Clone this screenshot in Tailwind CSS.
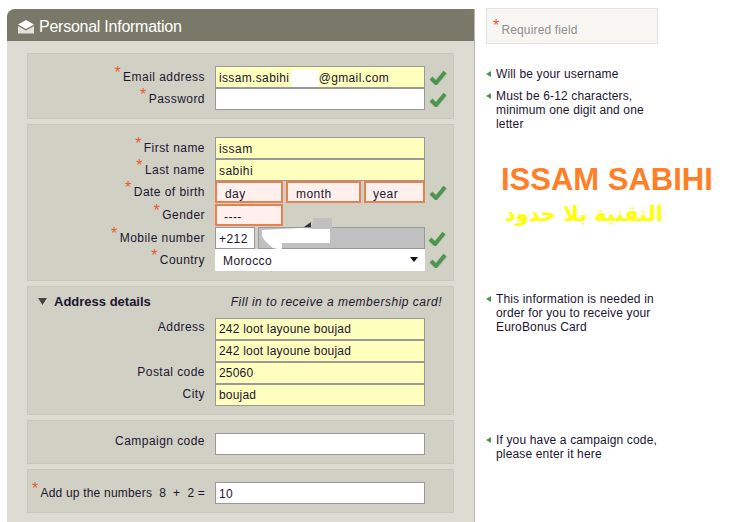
<!DOCTYPE html>
<html lang="en">
<head>
<meta charset="utf-8">
<script src="https://cdn.jsdelivr.net/npm/@tailwindcss/browser@4"></script>
<title>Personal Information</title>
</head>
<body class="bg-white font-['Liberation_Sans',Arial,sans-serif] text-[12px] text-[#1c1530] tracking-[0.45px] overflow-hidden">
<div class="flex h-[522px] w-[732px] overflow-hidden">
  <main class="ml-[7px] mt-[9px] w-[468px] h-[513px] shrink-0 bg-[#dddcd3] border-r border-[#b9b8ae] rounded-tl-[8px]">
    <header class="h-[32px] bg-[#7a7868] rounded-tl-[8px] flex items-center pl-[11px] pt-[3px] text-white text-[16px] tracking-[-0.25px]">
      <svg width="16" height="15" viewBox="0 0 16 15" class="mr-[5px]"><path d="M0 5.500 8 1l8 4.500-8 4.500z" fill="#fff"/><path d="M0 7l8 4.500L16 7v7.500H0z" fill="#e3e2da"/></svg>
      Personal Information
    </header>
    <div class="pt-[12px] pl-[20px] flex flex-col gap-[5px] w-[447px]">

      <section class="h-[66px] bg-[#d1d0c4] border border-[#c8c7ba] pt-[12px] relative">
        <div class="flex h-[22px]"><label class="w-[177px] text-right -mt-[1px]"><span class="text-[#ee5a2a] text-[16px] leading-none align-[3px] mr-[2px]">*</span>Email address</label><input class="ml-[10px] w-[210px] h-[22px] bg-[#ffffbd] border border-[#999] px-[3px] pt-[1px] tracking-[0.35px]" value="issam.sabihi        @gmail.com"><svg class="ml-[4px] mt-[3px]" width="18" height="16" viewBox="0 0 18 16"><path d="M2 10l5 5L17 4" fill="none" stroke="#c2c1b5" stroke-width="4"/><path d="M2 9l5 5L16 3" fill="none" stroke="#4c9650" stroke-width="4"/></svg></div>
        <div class="flex h-[22px]"><label class="w-[177px] text-right -mt-[1px]"><span class="text-[#ee5a2a] text-[16px] leading-none align-[3px] mr-[2px]">*</span>Password</label><input class="ml-[10px] w-[210px] h-[22px] bg-white border border-[#999] px-[3px]"><svg class="ml-[4px] mt-[3px]" width="18" height="16" viewBox="0 0 18 16"><path d="M2 10l5 5L17 4" fill="none" stroke="#c2c1b5" stroke-width="4"/><path d="M2 9l5 5L16 3" fill="none" stroke="#4c9650" stroke-width="4"/></svg></div>
        <div class="absolute left-[263px] top-[16px] w-[28px] h-[17px] bg-white rounded-[4px]"></div>
      </section>

      <section class="h-[157px] bg-[#d1d0c4] border border-[#c8c7ba] pt-[12px] relative">
        <div class="flex h-[22px]"><label class="w-[177px] text-right -mt-[1px]"><span class="text-[#ee5a2a] text-[16px] leading-none align-[3px] mr-[2px]">*</span>First name</label><input class="ml-[10px] w-[210px] h-[22px] bg-[#ffffbd] border border-[#999] px-[3px] pt-[1px]" value="issam"></div>
        <div class="flex h-[22px]"><label class="w-[177px] text-right -mt-[1px]"><span class="text-[#ee5a2a] text-[16px] leading-none align-[3px] mr-[2px]">*</span>Last name</label><input class="ml-[10px] w-[210px] h-[22px] bg-[#ffffbd] border border-[#999] px-[3px] pt-[1px]" value="sabihi"></div>
        <div class="flex h-[23px]"><label class="w-[177px] text-right -mt-[1px]"><span class="text-[#ee5a2a] text-[16px] leading-none align-[3px] mr-[2px]">*</span>Date of birth</label>
          <div class="ml-[10px] w-[68px] h-[22px] bg-[#fff0ee] border-2 border-[#e8804f] pl-[8px] pt-[2px]">day</div>
          <div class="ml-[3px] w-[75px] h-[22px] bg-[#fff0ee] border-2 border-[#e8804f] pl-[8px] pt-[2px]">month</div>
          <div class="ml-[3px] w-[61px] h-[22px] bg-[#fff0ee] border-2 border-[#e8804f] pl-[7px] pt-[2px]">year</div>
          <svg class="ml-[4px] mt-[3px]" width="18" height="16" viewBox="0 0 18 16"><path d="M2 10l5 5L17 4" fill="none" stroke="#c2c1b5" stroke-width="4"/><path d="M2 9l5 5L16 3" fill="none" stroke="#4c9650" stroke-width="4"/></svg></div>
        <div class="flex h-[23px]"><label class="w-[177px] text-right -mt-[1px]"><span class="text-[#ee5a2a] text-[16px] leading-none align-[3px] mr-[2px]">*</span>Gender</label><div class="ml-[10px] w-[68px] h-[22px] bg-[#fff0ee] border-2 border-[#e8804f] pl-[7px] pt-[2px]">----</div></div>
        <div class="flex h-[22px]"><label class="w-[177px] text-right -mt-[1px]"><span class="text-[#ee5a2a] text-[16px] leading-none align-[3px] mr-[2px]">*</span>Mobile number</label><input class="ml-[10px] w-[40px] h-[22px] bg-white border border-[#999] px-[3px] pt-[1px]" value="+212"><div class="ml-[3px] w-[167px] h-[22px] bg-[#c0c0c0] border border-[#999]"></div><svg class="ml-[3px] mt-[3px]" width="18" height="16" viewBox="0 0 18 16"><path d="M2 10l5 5L17 4" fill="none" stroke="#c2c1b5" stroke-width="4"/><path d="M2 9l5 5L16 3" fill="none" stroke="#4c9650" stroke-width="4"/></svg></div>
        <div class="flex h-[22px]"><label class="w-[177px] text-right -mt-[1px]"><span class="text-[#ee5a2a] text-[16px] leading-none align-[3px] mr-[2px]">*</span>Country</label><div class="ml-[10px] w-[210px] h-[22px] bg-white pl-[8px] pt-[3px] flex justify-between pr-[7px]">Morocco<svg class="mt-[5px]" width="8" height="5" viewBox="0 0 8 5"><path d="M0 0h8L4 5z" fill="#111"/></svg></div><svg class="ml-[4px] mt-[3px]" width="18" height="16" viewBox="0 0 18 16"><path d="M2 10l5 5L17 4" fill="none" stroke="#c2c1b5" stroke-width="4"/><path d="M2 9l5 5L16 3" fill="none" stroke="#4c9650" stroke-width="4"/></svg></div>
        <svg class="absolute left-[229px] top-[91px]" width="76" height="36" viewBox="0 0 76 36"><path d="M5 14 43 12 73 13V27H25V34L16 32 8 25 5 20z" fill="#fff"/><path d="M56 2H75V13H55z" fill="#c0c0c0"/><path d="M47 11 54 6V11z" fill="#333"/></svg>
      </section>

      <section class="h-[129px] bg-[#d1d0c4] border border-[#c8c7ba] pt-[6px]">
        <div class="flex items-center h-[17px] pl-[10px] mb-[8px]">
          <svg width="9" height="7" viewBox="0 0 9 7"><path d="M0 0h9L4.500 7z" fill="#444"/></svg>
          <strong class="ml-[7px] text-[13px] tracking-[0px] text-[#1c1530]">Address details</strong>
          <em class="ml-auto mr-[11px] tracking-[0.5px]">Fill in to receive a membership card!</em>
        </div>
        <div class="flex h-[22px]"><label class="w-[177px] text-right">Address</label><input class="ml-[10px] w-[210px] h-[22px] bg-[#ffffbd] border border-[#999] px-[3px] tracking-[0.2px]" value="242 loot layoune boujad"></div>
        <div class="flex h-[22px]"><label class="w-[177px] text-right"></label><input class="ml-[10px] w-[210px] h-[22px] bg-[#ffffbd] border border-[#999] px-[3px] tracking-[0.2px]" value="242 loot layoune boujad"></div>
        <div class="flex h-[22px]"><label class="w-[177px] text-right mt-[1px]">Postal code</label><input class="ml-[10px] w-[210px] h-[22px] bg-[#ffffbd] border border-[#999] px-[3px] tracking-[0.2px]" value="25060"></div>
        <div class="flex h-[22px]"><label class="w-[177px] text-right mt-[1px]">City</label><input class="ml-[10px] w-[210px] h-[22px] bg-[#ffffbd] border border-[#999] px-[3px] tracking-[0.2px]" value="boujad"></div>
      </section>

      <section class="h-[44px] bg-[#d1d0c4] border border-[#c8c7ba] pt-[12px]">
        <div class="flex h-[22px]"><label class="w-[177px] text-right -mt-[1px]">Campaign code</label><input class="ml-[10px] w-[210px] h-[22px] bg-white border border-[#999] px-[3px]"></div>
      </section>

      <section class="h-[44px] bg-[#d1d0c4] border border-[#c8c7ba] pt-[12px]">
        <div class="flex h-[22px]"><label class="w-[177px] text-right -mt-[1px] whitespace-nowrap tracking-[0.2px]"><span class="text-[#ee5a2a] text-[16px] leading-none align-[3px] mr-[2px]">*</span>Add up the numbers&nbsp; 8 &nbsp;+&nbsp; 2 =</label><input class="ml-[10px] w-[210px] h-[22px] bg-white border border-[#999] px-[3px] pt-[1px]" value="10"></div>
      </section>
    </div>
  </main>

  <aside class="ml-[11px] w-[240px] shrink-0 relative tracking-[0.15px]">
    <div class="mt-[8px] w-[172px] h-[36px] bg-[#f7f6f3] border border-[#e3e3e0] pl-[6px] pt-[9px] text-[#8f8f8f]"><span class="text-[#ee5a2a] text-[16px] leading-none align-[3px] mr-[2px]">*</span>Required field</div>
    <p class="mt-[23px] flex leading-[14px]"><svg class="mt-[4px] mr-[5px] shrink-0" width="5" height="6" viewBox="0 0 5 6"><path d="M5 0v6L0 3z" fill="#4c9650"/></svg>Will be your username</p>
    <p class="mt-[8px] flex leading-[14px] w-[172px]"><svg class="mt-[4px] mr-[5px] shrink-0" width="5" height="6" viewBox="0 0 5 6"><path d="M5 0v6L0 3z" fill="#4c9650"/></svg><span>Must be 6-12 characters, minimum one digit and one letter</span></p>
    <h2 class="mt-[31px] ml-[15px] font-bold text-[#ff7f27] text-[31px] leading-[36px] tracking-[0px] whitespace-nowrap">ISSAM SABIHI</h2>
    <p dir="rtl" class="ml-[16px] w-[161px] mt-[3px] font-bold text-[#ffff00] text-[21px] leading-[26px] tracking-[0px] font-['DejaVu_Sans','Liberation_Sans',sans-serif] whitespace-nowrap">التقنية بلا حدود</p>
    <p class="mt-[65px] flex leading-[14px] w-[180px]"><svg class="mt-[4px] mr-[5px] shrink-0" width="5" height="6" viewBox="0 0 5 6"><path d="M5 0v6L0 3z" fill="#4c9650"/></svg><span>This information is needed in order for you to receive your EuroBonus Card</span></p>
    <p class="mt-[99px] flex leading-[14px] w-[172px]"><svg class="mt-[4px] mr-[5px] shrink-0" width="5" height="6" viewBox="0 0 5 6"><path d="M5 0v6L0 3z" fill="#4c9650"/></svg><span>If you have a campaign code, please enter it here</span></p>
  </aside>
</div>
</body>
</html>
